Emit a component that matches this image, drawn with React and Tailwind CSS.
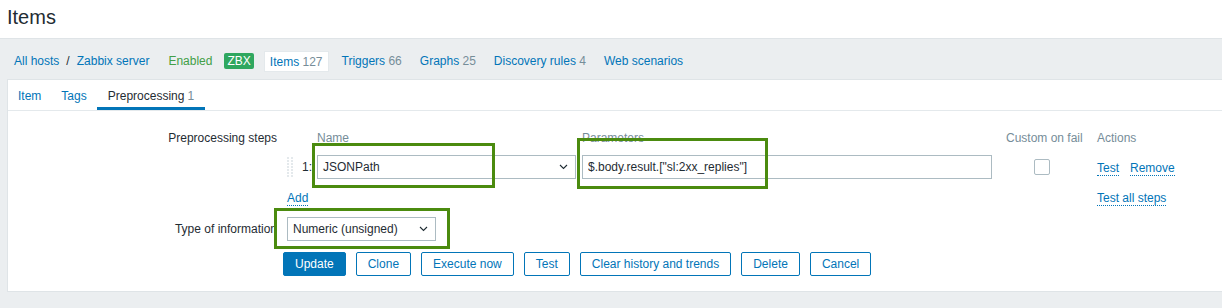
import React from "react";

const font = { fontFamily: '"Liberation Sans", Arial, sans-serif' };

const Chevron = () => (
  <svg width="9" height="6" viewBox="0 0 9 6" className="shrink-0">
    <path d="M1 1 L4.5 4.5 L8 1" fill="none" stroke="#1f2c33" strokeWidth="1.1" />
  </svg>
);

const Select = ({ value, className }) => (
  <div
    className={
      "flex items-center justify-between h-[24px] border border-[#acbbc2] bg-white pl-[5px] pr-[7px] text-[12px] text-[#1f2c33] " +
      className
    }
  >
    <span>{value}</span>
    <Chevron />
  </div>
);

const DragHandle = () => (
  <svg width="6" height="20" viewBox="0 0 6 20">
    {[0, 1, 2, 3, 4, 5, 6].map((r) => (
      <g key={r}>
        <rect x="0" y={r * 3} width="2" height="2" fill="#e4e9ec" />
        <rect x="4" y={r * 3} width="2" height="2" fill="#e4e9ec" />
      </g>
    ))}
  </svg>
);

const DotLink = ({ children }) => (
  <span className="text-[#0275b8] border-b border-dotted border-[#0275b8] leading-[14px]">{children}</span>
);

const Btn = ({ children, primary }) => (
  <button
    className={
      "h-[24px] px-[11px] rounded-[2px] border border-[#0275b8] text-[12px] " +
      (primary ? "bg-[#0275b8] text-white" : "bg-white text-[#0275b8]")
    }
  >
    {children}
  </button>
);

const nav = [
  ["Triggers", "66"],
  ["Graphs", "25"],
  ["Discovery rules", "4"],
  ["Web scenarios", ""],
];

export default function App() {
  return (
    <div className="w-[1222px] h-[308px] overflow-hidden bg-[#ebeef0] text-[12px] text-[#1f2c33]" style={font}>
      <div className="bg-white h-[39px] pl-[7px] pt-[5px] border-b border-[#dfe4e7]">
        <h1 className="text-[20px] leading-[24px]">Items</h1>
      </div>

      {/* breadcrumbs */}
      <div className="flex items-center h-[40px] pl-[14px] pt-[4px]">
        <span className="text-[#0275b8]">All hosts</span>
        <span className="mx-[7px]">/</span>
        <span className="text-[#0275b8]">Zabbix server</span>
        <span className="text-[#429e47] ml-[19px]">Enabled</span>
        <span className="ml-[12px] bg-[#2fa75f] text-white px-[3px] h-[16px] leading-[16px] rounded-[2px]">ZBX</span>
        <span className="ml-[10px] bg-white h-[21px] leading-[20px] px-[5px] border border-[#e4e9ec]">
          <span className="text-[#0275b8]">Items</span> <span className="text-[#768d99]">127</span>
        </span>
        {nav.map(([n, c], i) => (
          <span key={n} className={i === 0 ? "ml-[7px] px-[6px]" : "ml-[6px] px-[6px]"}>
            <span className="text-[#0275b8]">{n}</span>
            {c && <span className="text-[#768d99]"> {c}</span>}
          </span>
        ))}
      </div>

      {/* card */}
      <div className="relative ml-[7px] w-[1240px] bg-white border border-[#dfe4e7]">
        <div className="flex h-[31px] border-b border-[#e4e9ec]">
          <div className="px-[10px] flex items-center pt-[1px] text-[#0275b8]">Item</div>
          <div className="px-[10px] flex items-center pt-[1px] text-[#0275b8]">Tags</div>
          <div className="px-[11px] flex items-center border-b-[3px] border-[#0275b8] pt-[4px]">
            Preprocessing <span className="text-[#768d99] ml-[3px]">1</span>
          </div>
        </div>

        <div className="pt-[20px] pb-[15px]">
          {/* steps */}
          <div className="flex">
            <div className="w-[269px] text-right leading-[14px]">Preprocessing steps</div>
            <div className="ml-[10px]">
              <div className="flex leading-[14px] text-[#768d99] h-[14px]">
                <div className="w-[30px]" />
                <div className="w-[265px]">Name</div>
                <div className="w-[424px]">Parameters</div>
                <div className="w-[91px]">Custom on fail</div>
                <div>Actions</div>
              </div>
              <div className="flex items-center mt-[10px] h-[24px]">
                <div className="w-[30px] flex items-center">
                  <DragHandle />
                  <span className="ml-[9px]">1:</span>
                </div>
                <Select value="JSONPath" className="w-[259px]" />
                <input
                  readOnly
                  value={'$.body.result.["sl:2xx_replies"]'}
                  className="ml-[6px] w-[410px] h-[24px] border border-[#acbbc2] px-[5px] text-[12px] text-[#1f2c33] outline-none"
                  style={font}
                />
                <div className="ml-[14px] w-[91px] pl-[28px]">
                  <div className="w-[16px] h-[16px] border border-[#acbbc2] rounded-[2px]" />
                </div>
                <div className="flex items-center gap-[11px] pt-[2px]">
                  <DotLink>Test</DotLink>
                  <DotLink>Remove</DotLink>
                </div>
              </div>
              <div className="flex items-start mt-[12px] h-[14px] leading-[14px]">
                <div className="w-[810px] leading-[14px]">
                  <DotLink>Add</DotLink>
                </div>
                <DotLink>Test all steps</DotLink>
              </div>
            </div>
          </div>

          {/* type of information */}
          <div className="flex items-center mt-[12px]">
            <div className="w-[269px] text-right">Type of information</div>
            <Select value="Numeric (unsigned)" className="ml-[10px] w-[149px]" />
          </div>

          <div className="flex gap-[10px] mt-[11px] ml-[275px]">
            <Btn primary>Update</Btn>
            <Btn>Clone</Btn>
            <Btn>Execute now</Btn>
            <Btn>Test</Btn>
            <Btn>Clear history and trends</Btn>
            <Btn>Delete</Btn>
            <Btn>Cancel</Btn>
          </div>
        </div>

        {/* annotation highlights */}
        <div className="absolute left-[304px] top-[63px] w-[183px] h-[45px] border-[3px] border-[#4b8b0f]" />
        <div className="absolute left-[569px] top-[58px] w-[191px] h-[51px] border-[3px] border-[#4b8b0f]" />
        <div className="absolute left-[266px] top-[128px] w-[176px] h-[41px] border-[3px] border-[#4b8b0f]" />
      </div>
    </div>
  );
}
